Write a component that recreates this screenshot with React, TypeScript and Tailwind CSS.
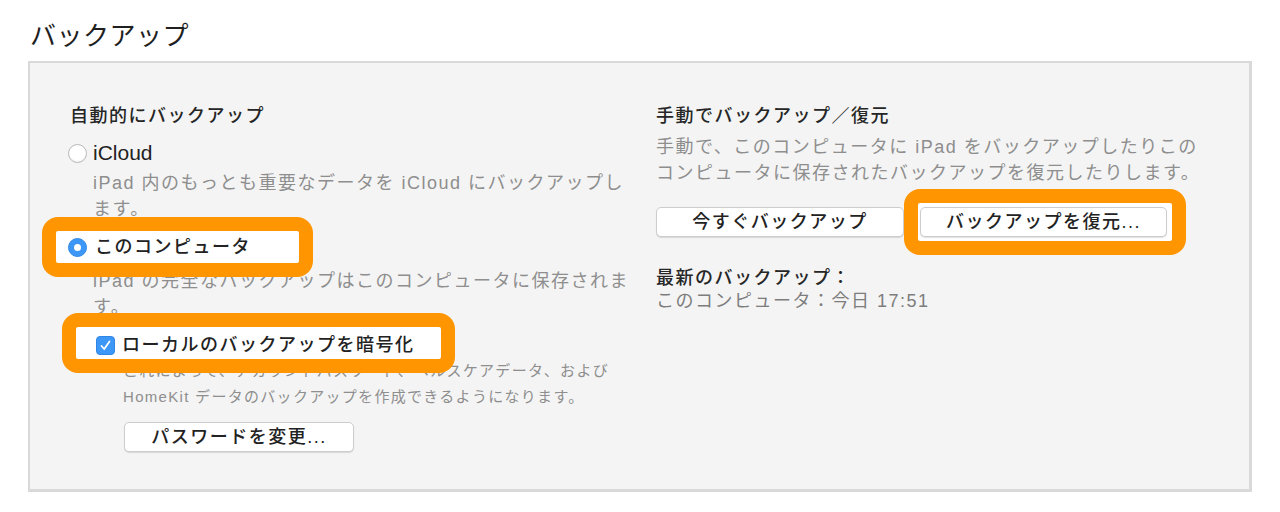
import type { ReactNode } from "react";

const font = { fontFamily: '"Liberation Sans", "Noto Sans CJK JP", sans-serif' };

function Radio({ checked }: { checked?: boolean }) {
  if (checked) {
    return (
      <span className="w-[19px] h-[19px] rounded-full bg-[#3d97f7] border border-[#2f86e6] flex items-center justify-center shrink-0">
        <span className="w-[7px] h-[7px] rounded-full bg-white" />
      </span>
    );
  }
  return (
    <span className="w-[19px] h-[19px] rounded-full bg-white border border-[#b8b8b8] shadow-[inset_0_-1px_1px_rgba(0,0,0,0.06)] shrink-0" />
  );
}

function Checkbox() {
  return (
    <span className="w-[19px] h-[19px] rounded-[4px] bg-[#3d97f7] border border-[#2f86e6] flex items-center justify-center shrink-0">
      <svg width="13" height="13" viewBox="0 0 13 13" fill="none">
        <path d="M2.5 7 L5.2 10 L10.5 2.5" stroke="white" strokeWidth="1.8" strokeLinecap="round" strokeLinejoin="round" />
      </svg>
    </span>
  );
}

function Button({ children, className }: { children: ReactNode; className?: string }) {
  return (
    <div
      className={
        "h-[30px] bg-white border border-[#cdcdcd] rounded-[5px] shadow-[0_1px_1px_rgba(0,0,0,0.12)] flex items-center justify-center text-[18px] font-medium text-[#222] tracking-[1.5px] " +
        (className ?? "")
      }
    >
      {children}
    </div>
  );
}

// annotation frame drawn over the screenshot
function Highlight({ className }: { className: string }) {
  return <span className={"absolute z-10 border-[14px] border-[#ff9500] bg-white rounded-[16px] " + className} />;
}

function Desc({ lines, className }: { lines: string[]; className?: string }) {
  return (
    <div className={"leading-[26px] text-[#8e8e8e] whitespace-nowrap " + (className ?? "text-[18px] tracking-[1.5px]")}>
      {lines.map((l) => (
        <div key={l}>{l}</div>
      ))}
    </div>
  );
}

export default function App() {
  return (
    <div className="w-[1280px] h-[512px] bg-white overflow-hidden" style={font}>
      <div className="pl-[30px] pt-[20px] text-[26px] leading-[32px] text-[#1f1f1f] tracking-[0.5px]">バックアップ</div>

      <div className="ml-[28px] mt-[9px] w-[1224px] h-[431px] bg-[#f4f4f4] border-t-2 border-l-2 border-r-[3px] border-b-[3px] border-[#d9d9d9] pl-[38px] pt-[40px] flex">
        {/* left column */}
        <div className="w-[588px] flex flex-col">
          <div className="ml-[2px] text-[18px] leading-[26px] font-medium text-[#262626] tracking-[1.5px]">自動的にバックアップ</div>

          <div className="mt-[11px] flex items-center gap-[6px] h-[26px]">
            <Radio />
            <span className="text-[21px] text-[#222]">iCloud</span>
          </div>
          <Desc className="mt-[4px] ml-[25px] text-[18px] tracking-[1.5px]" lines={["iPad 内のもっとも重要なデータを iCloud にバックアップし", "ます。"]} />

          <div className="relative mt-[12px] h-[26px]">
            <Highlight className="-left-[26px] -top-[17px] w-[271px] h-[60px]" />
            <div className="relative z-20 flex items-center gap-[8px] h-[26px]">
              <Radio checked />
              <span className="text-[18px] font-medium text-[#222] tracking-[1.5px]">このコンピュータ</span>
            </div>
          </div>
          <Desc className="mt-[8px] ml-[25px] text-[18px] tracking-[1.5px]" lines={["iPad の完全なバックアップはこのコンピュータに保存されま", "す。"]} />

          <div className="relative mt-[12px] ml-[28px] h-[26px]">
            <Highlight className="-left-[34px] -top-[19px] w-[393px] h-[60px]" />
            <div className="relative z-20 flex items-center gap-[7px] h-[26px]">
              <Checkbox />
              <span className="text-[18px] font-medium text-[#222] tracking-[1.5px]">ローカルのバックアップを暗号化</span>
            </div>
          </div>
          <Desc
            className="ml-[55px] text-[15px] tracking-[1.3px] leading-[25px]"
            lines={["これによって、アカウントパスワード、ヘルスケアデータ、および", "HomeKit データのバックアップを作成できるようになります。"]}
          />

          <Button className="mt-[12px] ml-[56px] w-[230px]">パスワードを変更...</Button>
        </div>

        {/* right column */}
        <div className="flex flex-col">
          <div className="text-[18px] leading-[26px] font-medium text-[#262626] tracking-[1.5px]">手動でバックアップ／復元</div>
          <Desc
            className="mt-[5px] text-[18px] tracking-[1.5px]"
            lines={["手動で、このコンピュータに iPad をバックアップしたりこの", "コンピュータに保存されたバックアップを復元したりします。"]}
          />

          <div className="mt-[21px] flex gap-[16px]">
            <Button className="w-[248px]">今すぐバックアップ</Button>
            <div className="relative">
              <Highlight className="-left-[16px] -top-[18px] w-[282px] h-[66px]" />
              <Button className="relative z-20 w-[247px]">バックアップを復元...</Button>
            </div>
          </div>

          <div className="mt-[30px] text-[18px] leading-[23px] font-medium text-[#262626] tracking-[1.5px]">最新のバックアップ：</div>
          <div className="text-[18px] leading-[23px] text-[#7d7d7d] tracking-[1.5px]">このコンピュータ：今日 17:51</div>
        </div>
      </div>
    </div>
  );
}
